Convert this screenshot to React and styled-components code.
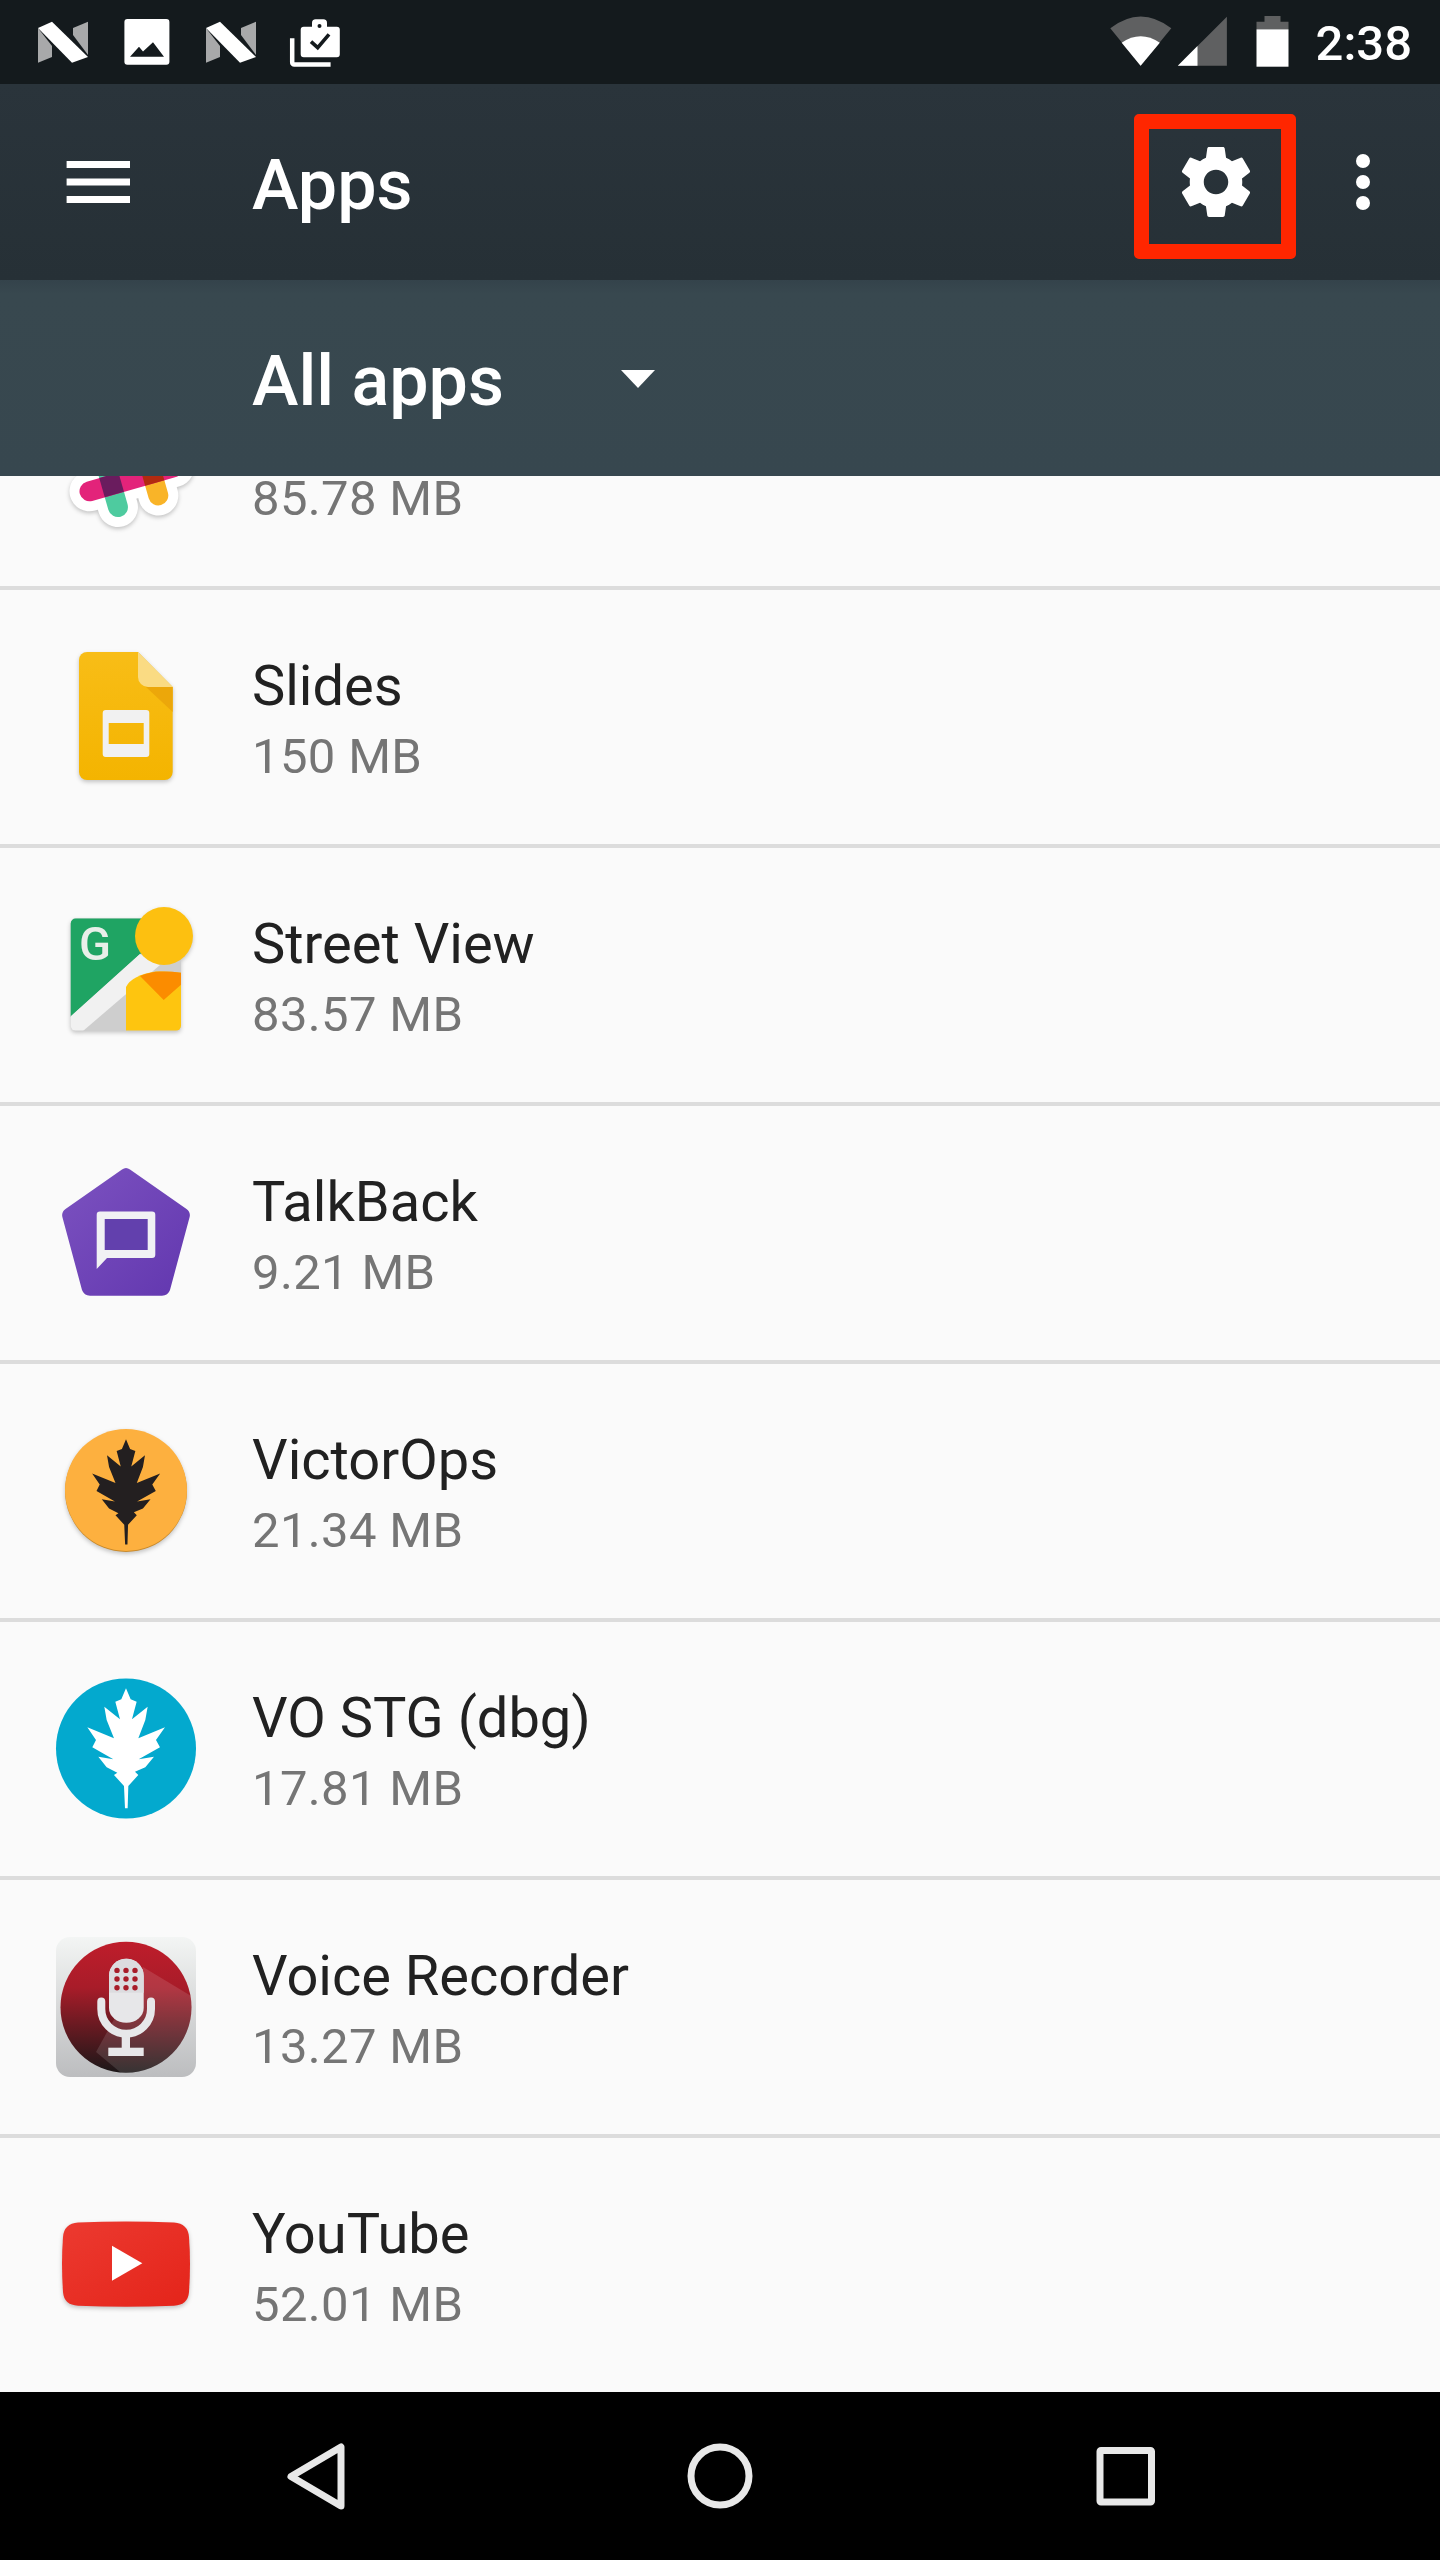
import React from "react";
import styled, { createGlobalStyle } from "styled-components";

const Global = createGlobalStyle`
  html, body { margin: 0; padding: 0; background: #fafafa; }
  * { box-sizing: border-box; }
`;

const Screen = styled.div`
  width: 1440px;
  height: 2560px;
  display: flex;
  flex-direction: column;
  overflow: hidden;
  font-family: Roboto, "Liberation Sans", sans-serif;
  background: #fafafa;
`;

const StatusBar = styled.div`
  height: 84px;
  flex: none;
  display: flex;
  align-items: center;
  padding: 0 28px 0 21px;
  background: #141a1d;
`;
const Slot = styled.svg`
  display: block;
  flex: none;
  width: ${(p) => p.$w || 84}px;
  height: 84px;
  margin-left: ${(p) => p.$ml || 0}px;
`;
const Spacer = styled.div`
  flex: 1;
`;
const Clock = styled.div`
  margin-left: 27px;
  padding-top: 4px;
  font-size: 49px;
  font-weight: 500;
  line-height: 80px;
  color: #fff;
`;

const Toolbar = styled.div`
  height: 196px;
  flex: none;
  display: flex;
  align-items: center;
  padding: 0 35px 0 56px;
  background: linear-gradient(#2a343b, #263036);
  position: relative;
  z-index: 2;
`;
const Title = styled.div`
  margin-left: 112px;
  padding-top: 6px;
  font-size: 70px;
  font-weight: 500;
  line-height: 84px;
  color: #fff;
`;
const IconButton = styled.div`
  position: relative;
  width: 84px;
  height: 84px;
  flex: none;
`;
const Highlight = styled.div`
  position: absolute;
  left: -40px;
  right: -38px;
  top: -26px;
  bottom: -35px;
  border: 15px solid #ff2600;
  border-radius: 5px;
`;
const Glyph = styled.svg`
  display: block;
  width: 84px;
  height: 84px;
`;
const KebabSlot = styled(IconButton)`
  margin-left: 63px;
`;

const SubBar = styled.div`
  height: 196px;
  flex: none;
  display: flex;
  align-items: center;
  padding-left: 252px;
  background: linear-gradient(#34434b 0, #38484f 14px, #37474f 100%);
`;
const SubTitle = styled.div`
  padding-top: 6px;
  font-size: 70px;
  font-weight: 500;
  line-height: 84px;
  color: #fff;
`;
const Caret = styled.div`
  margin-left: 117px;
  margin-top: 2px;
  width: 0;
  height: 0;
  border-left: 17px solid transparent;
  border-right: 17px solid transparent;
  border-top: 18px solid #fff;
`;

const List = styled.div`
  flex: 1;
  min-height: 0;
  overflow: hidden;
  background: #fafafa;
`;
const Row = styled.div`
  height: ${(p) => (p.$last ? 254 : 258)}px;
  margin-top: ${(p) => (p.$first ? -144 : 0)}px;
  display: flex;
  align-items: center;
  gap: 56px;
  padding-left: 56px;
  border-bottom: ${(p) => (p.$last ? "none" : "4px solid #dcdcdc")};
`;
const AppIcon = styled.svg`
  display: block;
  flex: none;
  width: 140px;
  height: 140px;
  overflow: visible;
  filter: ${(p) => (p.$shadow ? "drop-shadow(0 2px 2px rgba(0,0,0,.22))" : "none")};
`;
const AppText = styled.div`
  display: flex;
  flex-direction: column;
`;
const AppName = styled.div`
  min-height: 80px;
  font-size: 56px;
  line-height: 80px;
  color: #212121;
  white-space: nowrap;
`;
const AppSize = styled.div`
  font-size: 49px;
  line-height: 62px;
  letter-spacing: 0.35px;
  color: #757575;
  white-space: nowrap;
`;

const NavBar = styled.div`
  height: 168px;
  flex: none;
  display: flex;
  align-items: center;
  justify-content: center;
  gap: 320px;
  background: #000;
`;

const LEAF =
  "M378 85 L392 118 L410 125 L396 178 L443 140 L436 180 L415 235 L495 202 L468 240 L480 262 L416 298 L462 290 L436 322 L405 335 L415 345 L385 378 L383 445 L375 445 L372 378 L342 345 L352 338 L320 322 L295 290 L340 298 L277 262 L288 240 L262 202 L342 235 L320 180 L313 140 L360 178 L346 125 L364 118 Z";

const NLogo = () => (
  <Slot viewBox="0 0 84 84">
    <polygon points="17,28 31,46 31,57 17,62.7" fill="#a8a9aa" />
    <polygon points="67,21.7 67,55 52,35 52,28" fill="#a8a9aa" />
    <polygon points="17,28 31,21.7 67,57 51,62.7" fill="#fff" />
  </Slot>
);

const PictureNote = () => (
  <Slot viewBox="0 0 84 84">
    <rect x="19.4" y="19" width="45" height="45.7" rx="3" fill="#fff" />
    <polygon points="25,56.7 34,46.7 38,51.5 48,42.3 59,56.7" fill="#141a1d" />
  </Slot>
);

const ClipboardCheck = () => (
  <Slot viewBox="0 0 84 84">
    <path d="M19.2 38.3V62.5a2 2 0 0 0 2 2H57.6" fill="none" stroke="#fff" strokeWidth="4.5" />
    <path
      d="M30.7 26.7H39V23a3.7 3.7 0 0 1 3.7-3.7h7.6A3.7 3.7 0 0 1 54 23v3.7h9.8a3 3 0 0 1 3 3v24.6a3 3 0 0 1-3 3H30.7a3 3 0 0 1-3-3V29.7a3 3 0 0 1 3-3z"
      fill="#fff"
    />
    <circle cx="46.5" cy="26" r="2" fill="#141a1d" />
    <path d="M38 41.7l6.7 6L56 34.3" fill="none" stroke="#141a1d" strokeWidth="3.6" />
  </Slot>
);

const Wifi = () => (
  <Slot $w={64} viewBox="0 0 64 84">
    <path d="M1.3 28.3Q31.6 4.800 62.300 28.300L31.600 65.700Z" fill="#5f6061" />
    <path d="M12.700 42.700Q31.600 29.800 50.800 42.700L31.600 65.700Z" fill="#fff" />
  </Slot>
);

const Signal = () => (
  <Slot $w={50} $ml={4} viewBox="0 0 50 84">
    <polygon points="0.800,65.700 49.900,16.700 49.900,65.700" fill="#5f6061" />
    <polygon points="0.800,65.700 20.500,46 20.500,65.700" fill="#fff" />
  </Slot>
);

const Battery = () => (
  <Slot $w={33} $ml={29} viewBox="0 0 33 84">
    <path d="M8.500 16h16v5.700h8v7.600H0.500v-7.600h8z" fill="#5f6061" />
    <rect x="0.500" y="29.300" width="32" height="37.400" fill="#fff" />
  </Slot>
);

const SlackIcon = () => (
  <AppIcon viewBox="0 0 140 140" $shadow>
    <g transform="rotate(-16 70 70)">
      <g stroke="#fff" strokeWidth="40" strokeLinecap="round">
        <line x1="26" x2="114" y1="91" y2="91" />
        <line x1="26" x2="114" y1="49" y2="49" />
        <line x1="49" x2="49" y1="26" y2="114" />
        <line x1="91" x2="91" y1="26" y2="114" />
      </g>
      <g strokeWidth="20" strokeLinecap="round">
        <line x1="49" x2="49" y1="26" y2="114" stroke="#4ecb9f" />
        <line x1="91" x2="91" y1="26" y2="114" stroke="#f9b428" />
        <line x1="26" x2="114" y1="91" y2="91" stroke="#e3237a" />
      </g>
      <rect x="39" y="81" width="20" height="20" fill="#6a1c5e" />
      <rect x="81" y="81" width="20" height="20" fill="#b22a10" />
    </g>
  </AppIcon>
);

const SlidesIcon = () => (
  <AppIcon viewBox="0 0 140 140" $shadow>
    <defs>
      <linearGradient id="slidesFill" x1="0" x2="0" y1="0" y2="1">
        <stop offset="0" stopColor="#f8bd17" />
        <stop offset="1" stopColor="#f4b400" />
      </linearGradient>
    </defs>
    <path
      d="M31 5H82L116.700 40V125a8 8 0 0 1-8 8H31a8 8 0 0 1-8-8V13a8 8 0 0 1 8-8Z"
      fill="url(#slidesFill)"
    />
    <polygon points="90,40 116.700,40 116.700,65" fill="#eca70a" />
    <path d="M82 5L116.700 40H92a10 10 0 0 1-10-10Z" fill="#fadb83" />
    <path
      fillRule="evenodd"
      d="M49.700 63H90.300a3 3 0 0 1 3 3V107a3 3 0 0 1-3 3H49.700a3 3 0 0 1-3-3V66a3 3 0 0 1 3-3ZM52.700 76V97H87.700V76Z"
      fill="#f1f1f1"
    />
  </AppIcon>
);

const StreetViewIcon = () => (
  <AppIcon viewBox="0 0 140 140" $shadow>
    <defs>
      <clipPath id="svClip">
        <rect x="14.700" y="13.500" width="110.300" height="112.100" rx="5" />
      </clipPath>
    </defs>
    <g clipPath="url(#svClip)">
      <rect x="14" y="13" width="112" height="113" fill="#cecece" />
      <polygon points="14,13 126,13 126,30 84,49 14,112" fill="#1fa463" />
      <polygon points="14,112 84,49 104,60 27,126 14,126" fill="#f1f1f1" />
      <path d="M70 126V82Q76 70 100 66.500Q112 66 126 68V126Z" fill="#fec50f" />
      <path d="M84 71Q95 66.500 104 66.500Q115 66 126 68V79L107.700 95Z" fill="#fb8c00" />
    </g>
    <text
      x="39"
      y="54.500"
      textAnchor="middle"
      fontFamily="Roboto, sans-serif"
      fontWeight="500"
      fontSize="47"
      fill="#e8efe9"
    >
      G
    </text>
    <circle cx="108" cy="31" r="29" fill="#fdc010" />
  </AppIcon>
);

const TalkBackIcon = () => (
  <AppIcon viewBox="0 0 140 140">
    <defs>
      <linearGradient id="tbFill" x1="0" x2="1" y1="0" y2="1">
        <stop offset="0" stopColor="#7c52c0" />
        <stop offset="1" stopColor="#6237af" />
      </linearGradient>
    </defs>
    <path
      d="M66 6.500Q70 3.500 74 6.500L130.500 46Q135 49.500 133.500 54.500L114 127Q112 132.700 106 132.700H34Q28 132.700 26 127L6.500 54.500Q5 49.500 9.500 46Z"
      fill="url(#tbFill)"
    />
    <rect x="48.700" y="56" width="43" height="31" fill="#6240ad" />
    <path
      fillRule="evenodd"
      d="M44 48.400H96a3.300 3.300 0 0 1 3.300 3.300V91.700a3.300 3.300 0 0 1-3.300 3.300H51L40.700 106V51.700a3.300 3.300 0 0 1 3.300-3.300ZM48.700 56V87H91.700V56Z"
      fill="#f1f1f4"
    />
  </AppIcon>
);

const VictorOpsIcon = () => (
  <AppIcon viewBox="0 0 140 140" $shadow>
    <circle cx="70" cy="70" r="61" fill="#c98a2b" />
    <circle cx="70" cy="69" r="61" fill="#fdb03f" />
    <g transform="translate(70 18.300) scale(0.292) translate(-378 -85)">
      <path d={LEAF} fill="#231f20" />
    </g>
  </AppIcon>
);

const StagingIcon = () => (
  <AppIcon viewBox="0 0 140 140">
    <circle cx="70" cy="69.500" r="70" fill="#03a9ce" />
    <g transform="translate(-56 -19) scale(0.3333)">
      <path d={LEAF} fill="#fff" />
    </g>
  </AppIcon>
);

const VoiceRecorderIcon = () => (
  <AppIcon viewBox="0 0 140 140">
    <defs>
      <linearGradient id="vrBack" x1="0" x2="0" y1="0" y2="1">
        <stop offset="0" stopColor="#f3f5f4" />
        <stop offset="1" stopColor="#bcbdbf" />
      </linearGradient>
      <linearGradient id="vrDisc" x1="0" x2="0" y1="0" y2="1">
        <stop offset="0" stopColor="#bf1d2b" />
        <stop offset="0.35" stopColor="#a81c29" />
        <stop offset="1" stopColor="#1b1718" />
      </linearGradient>
      <clipPath id="vrClip">
        <circle cx="70" cy="70.300" r="65.500" />
      </clipPath>
    </defs>
    <rect width="140" height="140" rx="14" fill="url(#vrBack)" />
    <circle cx="70" cy="70.300" r="65.500" fill="url(#vrDisc)" />
    <g clipPath="url(#vrClip)">
      <polygon points="87,30 140,62 140,140 70,140 40,115" fill="#fff" opacity="0.12" />
    </g>
    <path d="M53 38.700a17.350 17 0 0 1 34.700 0V71a17.350 14.700 0 0 1-34.700 0Z" fill="#e7e7e9" />
    <path d="M53 55.700V38.700a17.350 17 0 0 1 34.700 0V55.700Z" fill="#dcdcdf" />
    <g fill="#a81c29">
      <circle cx="61" cy="33.400" r="2.700" />
      <circle cx="70" cy="33.400" r="2.700" />
      <circle cx="79" cy="33.400" r="2.700" />
      <circle cx="61" cy="42" r="2.700" />
      <circle cx="70" cy="42" r="2.700" />
      <circle cx="79" cy="42" r="2.700" />
      <circle cx="61" cy="50.700" r="2.700" />
      <circle cx="70" cy="50.700" r="2.700" />
      <circle cx="79" cy="50.700" r="2.700" />
    </g>
    <path
      d="M45.300 64.500V72a24.850 24.700 0 0 0 49.700 0V64.500"
      fill="none"
      stroke="#e7e7e9"
      strokeWidth="8"
      strokeLinecap="round"
    />
    <rect x="65.700" y="96" width="8.300" height="17" fill="#e7e7e9" />
    <rect x="52.300" y="110.700" width="35.400" height="8.300" fill="#e7e7e9" />
  </AppIcon>
);

const YouTubeIcon = () => (
  <AppIcon viewBox="0 0 140 140" $shadow>
    <defs>
      <linearGradient id="ytFill" x1="0" x2="1" y1="0" y2="1">
        <stop offset="0" stopColor="#ec3a30" />
        <stop offset="1" stopColor="#e4241a" />
      </linearGradient>
    </defs>
    <path
      d="M22 27.500Q70 25.500 118 27.500Q132 28.500 133 42Q135 69 133 97Q132 110 118 110.700Q70 112.700 22 110.700Q8 110 7 97Q5 69 7 42Q8 28.500 22 27.500Z"
      fill="url(#ytFill)"
    />
    <polygon points="56,50.700 86.300,68.200 56,85.700" fill="#fff" />
  </AppIcon>
);

const APPS = [
  { name: "", size: "85.78 MB", Icon: SlackIcon },
  { name: "Slides", size: "150 MB", Icon: SlidesIcon },
  { name: "Street View", size: "83.57 MB", Icon: StreetViewIcon },
  { name: "TalkBack", size: "9.21 MB", Icon: TalkBackIcon },
  { name: "VictorOps", size: "21.34 MB", Icon: VictorOpsIcon },
  { name: "VO STG (dbg)", size: "17.81 MB", Icon: StagingIcon },
  { name: "Voice Recorder", size: "13.27 MB", Icon: VoiceRecorderIcon },
  { name: "YouTube", size: "52.01 MB", Icon: YouTubeIcon },
];

export default function App() {
  return (
    <Screen>
      <Global />
      <StatusBar>
        <NLogo />
        <PictureNote />
        <NLogo />
        <ClipboardCheck />
        <Spacer />
        <Wifi />
        <Signal />
        <Battery />
        <Clock>2:38</Clock>
      </StatusBar>
      <Toolbar>
        <Glyph viewBox="0 0 84 84">
          <g fill="#fff">
            <rect x="10.600" y="21" width="63.400" height="7" />
            <rect x="10.600" y="38.500" width="63.400" height="7" />
            <rect x="10.600" y="56" width="63.400" height="7" />
          </g>
        </Glyph>
        <Title>Apps</Title>
        <Spacer />
        <IconButton>
          <Glyph viewBox="0 0 24 24">
            <path
              fill="#fff"
              d="M19.430 12.980c.04-.32.07-.64.07-.98s-.03-.66-.07-.98l2.110-1.650c.19-.15.24-.42.12-.64l-2-3.460c-.12-.22-.39-.3-.61-.22l-2.490 1c-.52-.4-1.080-.73-1.690-.98l-.38-2.650C14.460 2.180 14.250 2 14 2h-4c-.25 0-.46.18-.49.42l-.38 2.650c-.61.25-1.170.59-1.690.98l-2.490-1c-.23-.09-.49 0-.61.22l-2 3.460c-.13.22-.07.49.12.64l2.110 1.650c-.04.32-.07.65-.07.98s.03.66.07.98l-2.110 1.650c-.19.15-.24.42-.12.64l2 3.460c.12.22.39.3.61.22l2.490-1c.52.4 1.080.73 1.690.98l.38 2.650c.03.24.24.42.49.42h4c.25 0 .46-.18.49-.42l.38-2.650c.61-.25 1.170-.59 1.690-.98l2.490 1c.23.09.49 0 .61-.22l2-3.460c.12-.22.07-.49-.12-.64l-2.110-1.650zM12 15.500c-1.930 0-3.500-1.570-3.500-3.500s1.570-3.500 3.500-3.500 3.500 1.570 3.500 3.500-1.570 3.500-3.500 3.500z"
            />
          </Glyph>
          <Highlight />
        </IconButton>
        <KebabSlot>
          <Glyph viewBox="0 0 84 84">
            <g fill="#fff">
              <circle cx="42" cy="21" r="7" />
              <circle cx="42" cy="42" r="7" />
              <circle cx="42" cy="63" r="7" />
            </g>
          </Glyph>
        </KebabSlot>
      </Toolbar>
      <SubBar>
        <SubTitle>All apps</SubTitle>
        <Caret />
      </SubBar>
      <List>
        {APPS.map(({ name, size, Icon }, i) => (
          <Row key={size} $first={i === 0} $last={i === APPS.length - 1}>
            <Icon />
            <AppText>
              <AppName>{name}</AppName>
              <AppSize>{size}</AppSize>
            </AppText>
          </Row>
        ))}
      </List>
      <NavBar>
        <Glyph viewBox="0 0 84 84">
          <path d="M67 13V72L17 42.500Z" fill="none" stroke="#e8e8e8" strokeWidth="7" strokeLinejoin="round" />
        </Glyph>
        <Glyph viewBox="0 0 84 84">
          <circle cx="42" cy="42" r="29" fill="none" stroke="#e8e8e8" strokeWidth="7" />
        </Glyph>
        <Glyph viewBox="0 0 84 84">
          <rect x="18" y="16.500" width="51.500" height="51.500" rx="1" fill="none" stroke="#e8e8e8" strokeWidth="7" />
        </Glyph>
      </NavBar>
    </Screen>
  );
}
